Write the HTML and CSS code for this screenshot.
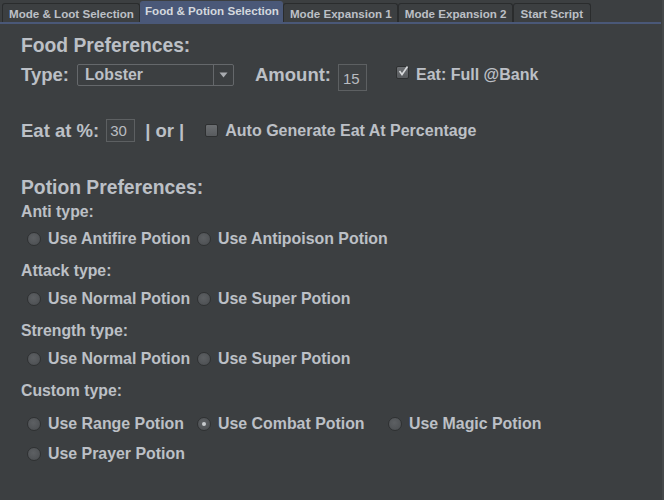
FILE: index.html
```html
<!DOCTYPE html>
<html>
<head>
<meta charset="utf-8">
<link rel="stylesheet" href="styles.css">
</head>
<body>
<div class="window">
  <div class="tabbar">
    <div class="tab">Mode &amp; Loot Selection</div>
    <div class="tab active">Food &amp; Potion Selection</div>
    <div class="tab">Mode Expansion 1</div>
    <div class="tab">Mode Expansion 2</div>
    <div class="tab last">Start Script</div>
  </div>
  <div class="content">
    <div class="heading h-food">Food Preferences:</div>
    <div class="row row-type">
      <span class="lbl big">Type:</span>
      <div class="combo"><span class="combo-text">Lobster</span><span class="combo-btn"><svg width="9" height="6" viewBox="0 0 9 6"><path d="M0.5 0.5 L8.5 0.5 L4.5 5.5 Z" fill="#a9acb0"/></svg></span></div>
      <span class="lbl big amount-lbl">Amount:</span>
      <div class="field amount">15</div>
      <span class="check checked"><svg width="13" height="13" viewBox="0 0 13 13"><path d="M2.5 6 L5 9.5 L10.5 1.5" fill="none" stroke="#d8dadc" stroke-width="1.6"/></svg></span>
      <span class="lbl">Eat: Full @Bank</span>
    </div>
    <div class="row row-eat">
      <span class="lbl big">Eat at %:</span>
      <div class="field pct">30</div>
      <span class="lbl big or">| or |</span>
      <span class="check auto"></span>
      <span class="lbl">Auto Generate Eat At Percentage</span>
    </div>
    <div class="heading h-potion">Potion Preferences:</div>
    <div class="sub first">Anti type:</div>
    <div class="radios">
      <span class="opt"><span class="radio"></span>Use Antifire Potion</span>
      <span class="opt"><span class="radio"></span>Use Antipoison Potion</span>
    </div>
    <div class="sub">Attack type:</div>
    <div class="radios">
      <span class="opt"><span class="radio"></span>Use Normal Potion</span>
      <span class="opt"><span class="radio"></span>Use Super Potion</span>
    </div>
    <div class="sub">Strength type:</div>
    <div class="radios">
      <span class="opt"><span class="radio"></span>Use Normal Potion</span>
      <span class="opt"><span class="radio"></span>Use Super Potion</span>
    </div>
    <div class="sub">Custom type:</div>
    <div class="radios custom">
      <span class="opt"><span class="radio"></span>Use Range Potion</span>
      <span class="opt"><span class="radio selected"></span>Use Combat Potion</span>
      <span class="opt"><span class="radio"></span>Use Magic Potion</span>
    </div>
    <div class="radios">
      <span class="opt"><span class="radio"></span>Use Prayer Potion</span>
    </div>
  </div>
</div>
</body>
</html>
```
FILE: styles.css
```css
html, body {
  margin: 0;
  padding: 0;
  background: #3c3f41;
}
body {
  font-family: "Liberation Sans", Arial, sans-serif;
  color: #bcc0c6;
}
.window {
  width: 664px;
  height: 500px;
  box-sizing: border-box;
  background: #3c3f41;
  border-right: 2px solid #45484a;
  overflow: hidden;
}
.tabbar {
  display: flex;
  align-items: flex-end;
  height: 22px;
  padding-left: 2px;
  border-bottom: 2px solid #4a5878;
  margin-right: 1px;
}
.tab {
  height: 19px;
  box-sizing: border-box;
  padding: 0 5px 0 6px;
  font-size: 11.6px;
  font-weight: bold;
  line-height: 19px;
  color: #bcc0c6;
  background: #3c3f41;
  border: 1px solid #2a2c2d;
  border-bottom: none;
  border-radius: 3px 3px 0 0;
  white-space: nowrap;
}
.tab.active {
  height: 21px;
  line-height: 18px;
  padding: 0 3px 0 4px;
  background: #4a5878;
  border-color: #4a5878;
  color: #d4d8de;
}
.tab.last {
  padding: 0 7px 0 7px;
}
.content {
  padding-left: 21px;
}
.heading {
  height: 24px;
  line-height: 24px;
  font-size: 19.3px;
  font-weight: bold;
}
.h-food { margin-top: 10px; }
.h-potion { margin-top: 30px; }
.row {
  display: flex;
  align-items: center;
  height: 30px;
  font-size: 16px;
  font-weight: bold;
}
.row-type { margin-top: 2px; }
.row-eat { margin-top: 26px; }
.lbl { white-space: nowrap; }
.lbl.big { font-size: 18.5px; }
.combo {
  margin-left: 8px;
  width: 157px;
  height: 22px;
  box-sizing: border-box;
  border: 1px solid #65686b;
  border-radius: 2px;
  display: flex;
  align-items: center;
}
.combo-text {
  flex: 1;
  padding-left: 7px;
  font-size: 15.8px;
}
.combo-btn {
  width: 19px;
  height: 20px;
  border-left: 1px solid #65686b;
  display: flex;
  align-items: center;
  justify-content: center;
}
.amount-lbl { margin-left: 21px; }
.field {
  box-sizing: border-box;
  border: 1px solid #5d6062;
  background: #3e4143;
  font-family: "Liberation Sans", Arial, sans-serif;
  font-weight: normal;
  font-size: 15px;
  color: #b9bcc0;
  white-space: nowrap;
}
.amount {
  margin-left: 7px;
  width: 29px;
  height: 27px;
  line-height: 27px;
  padding-left: 4px;
  align-self: flex-start;
  margin-top: 4px;
}
.check {
  width: 13px;
  height: 13px;
  box-sizing: border-box;
  border: 1px solid #2e3031;
  background: linear-gradient(#6b6e71, #585b5e);
  border-radius: 2px;
  position: relative;
}
.check svg {
  position: absolute;
  left: 0;
  top: -2px;
}
.checked {
  margin-left: 29px;
  margin-right: 7px;
  align-self: flex-start;
  margin-top: 6px;
}
.pct {
  margin-left: 7px;
  width: 29px;
  height: 23px;
  line-height: 21px;
  padding-left: 3px;
  margin-top: -1px;
}
.or { margin-left: 10px; font-size: 17.5px; }
.auto {
  margin-left: 21px;
  margin-right: 7px;
  margin-top: -2px;
}
.sub {
  height: 20px;
  line-height: 20px;
  font-size: 15.8px;
  font-weight: bold;
  margin-top: 10px;
}
.sub.first { margin-top: 2px; }
.radios {
  display: grid;
  grid-template-columns: 170px 191px auto;
  height: 24px;
  align-items: center;
  padding-left: 6px;
  margin-top: 6px;
  font-size: 15.9px;
  font-weight: bold;
}
.sub.first + .radios { margin-top: 5px; }
.radios.custom { margin-top: 11px; }
.opt {
  display: flex;
  align-items: center;
  white-space: nowrap;
}
.radio {
  width: 14px;
  height: 14px;
  box-sizing: border-box;
  border-radius: 50%;
  border: 1px solid #2f3132;
  background: radial-gradient(circle at 45% 40%, #5d6063, #4a4d50);
  margin-right: 7px;
  position: relative;
}
.radio.selected::after {
  content: "";
  position: absolute;
  left: 4px;
  top: 4px;
  width: 4px;
  height: 4px;
  border-radius: 50%;
  background: #c8cbce;
}
```
